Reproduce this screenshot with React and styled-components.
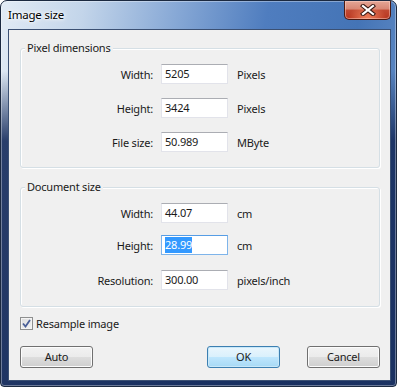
import React from 'react';
import styled, { createGlobalStyle } from 'styled-components';

const GlobalStyle = createGlobalStyle`
  html, body {
    margin: 0;
    padding: 0;
    background: #ffffff;
  }
  body {
    font-family: "Noto Sans", "Open Sans", sans-serif;
    font-size: 11px;
    letter-spacing: -0.2px;
    color: #1a1a1a;
  }
`;

const Window = styled.div`
  box-sizing: border-box;
  width: 397px;
  height: 387px;
  display: flex;
  flex-direction: column;
  border: 1px solid #1b2940;
  border-radius: 7px 7px 4px 4px;
  overflow: hidden;
  background:
    linear-gradient(to bottom, rgba(20, 40, 85, 0) 0px, rgba(20, 40, 85, 0) 70px, rgba(22, 44, 92, 0.9) 140px, rgba(22, 44, 92, 0.95) 100%),
    linear-gradient(100deg, #e2ebf5 0%, #c3d5ea 18%, #88a9d6 38%, #4f7dbf 58%, #4474b6 78%, #7098cd 100%);
  box-shadow: inset 0 0 0 1px rgba(255, 255, 255, 0.35);
`;

const TitleBar = styled.div`
  height: 28px;
  display: flex;
  align-items: flex-start;
  justify-content: space-between;
  flex-shrink: 0;
`;

const Title = styled.span`
  margin: 6px 0 0 7px;
  line-height: 16px;
  font-size: 11.5px;
  color: #000;
  text-shadow: 0 0 6px #fff, 0 0 4px #fff, 0 0 2px #fff;
`;

const CloseButton = styled.div`
  width: 47px;
  height: 19px;
  margin-right: 5px;
  box-sizing: border-box;
  border: 1px solid #4b1a12;
  border-top: none;
  border-radius: 0 0 5px 5px;
  background:
    radial-gradient(ellipse at 50% 100%, rgba(255, 150, 110, 0.8) 0%, rgba(255, 120, 90, 0) 60%),
    linear-gradient(to bottom, #e4a696 0%, #d78674 45%, #c14a33 50%, #b7341e 100%);
  box-shadow: inset 0 0 0 1px rgba(255, 220, 210, 0.45);
  display: flex;
  align-items: center;
  justify-content: center;
`;

const Client = styled.div`
  flex: 1;
  margin: 0 5px 5px 7px;
  border: 1px solid #3b5073;
  background: #f0f0f0;
  padding: 18px 10px 0 11px;
  display: flex;
  flex-direction: column;
`;

const GroupBox = styled.div`
  position: relative;
  box-sizing: border-box;
  height: 120px;
  margin-top: ${({ top }) => top || 0}px;
  border: 1px solid #d5dfe5;
  border-radius: 3px;
  box-shadow: inset 1px 1px 0 #fff, 1px 1px 0 #fff;
  padding-top: 15px;
`;

const Caption = styled.span`
  position: absolute;
  top: -9px;
  left: 4px;
  padding: 0 2px;
  line-height: 16px;
  background: #f0f0f0;
`;

const Row = styled.div`
  display: grid;
  grid-template-columns: 132px 67px auto;
  column-gap: 8px;
  align-items: center;
  height: 20px;
  margin-top: ${({ top }) => top || 0}px;
`;

const Label = styled.label`
  text-align: right;
`;

const Field = styled.div`
  box-sizing: border-box;
  height: 20px;
  padding: 0 3px;
  background: #fff;
  border: 1px solid ${({ focused }) => (focused ? '#7eb4ea' : '#e2e3ea')};
  border-top-color: ${({ focused }) => (focused ? '#569de5' : '#abadb3')};
  display: flex;
  align-items: center;
  line-height: 16px;
`;

const Selected = styled.span`
  background: #3399ff;
  color: #fff;
`;

const Unit = styled.span`
  padding-left: 1px;
`;

const CheckRow = styled.div`
  display: flex;
  align-items: center;
  gap: 3px;
  margin-top: 9px;
  height: 14px;
`;

const CheckBox = styled.div`
  box-sizing: border-box;
  width: 13px;
  height: 13px;
  border: 1px solid #8e8f8f;
  background: linear-gradient(135deg, #dcdcdc 0%, #f4f4f4 100%);
  box-shadow: inset 0 0 0 1px #f4f4f4;
  display: flex;
  align-items: center;
  justify-content: center;
`;

const ButtonRow = styled.div`
  display: flex;
  margin-top: 16px;
`;

const Button = styled.div`
  box-sizing: border-box;
  width: 73px;
  height: 22px;
  margin-left: ${({ push }) => (push ? 'auto' : '0')};
  margin-right: ${({ gapRight }) => gapRight || 0}px;
  border: 1px solid ${({ primary }) => (primary ? '#3c7fb1' : '#707070')};
  border-radius: 3px;
  background: ${({ primary }) =>
    primary
      ? 'linear-gradient(to bottom, #eaf6fd 0%, #d9f0fc 50%, #bee6fd 51%, #a7d9f5 100%)'
      : 'linear-gradient(to bottom, #f2f2f2 0%, #ebebeb 50%, #dddddd 51%, #cfcfcf 100%)'};
  box-shadow: inset 0 0 0 1px ${({ primary }) => (primary ? '#c8e8f9' : '#fcfcfc')};
  display: flex;
  align-items: center;
  justify-content: center;
  line-height: 16px;
`;

function App() {
  return (
    <>
      <GlobalStyle />
      <Window>
        <TitleBar>
          <Title>Image size</Title>
          <CloseButton>
            <svg width="16" height="12" viewBox="0 0 16 12">
              <path d="M3 2 L13 10 M13 2 L3 10" stroke="#3a1a14" strokeWidth="4.2" strokeLinecap="square" />
              <path d="M3 2 L13 10 M13 2 L3 10" stroke="#fff" strokeWidth="2.2" strokeLinecap="square" />
            </svg>
          </CloseButton>
        </TitleBar>
        <Client>
          <GroupBox>
            <Caption>Pixel dimensions</Caption>
            <Row>
              <Label>Width:</Label>
              <Field>5205</Field>
              <Unit>Pixels</Unit>
            </Row>
            <Row top={14}>
              <Label>Height:</Label>
              <Field>3424</Field>
              <Unit>Pixels</Unit>
            </Row>
            <Row top={14}>
              <Label>File size:</Label>
              <Field>50.989</Field>
              <Unit>MByte</Unit>
            </Row>
          </GroupBox>
          <GroupBox top={19}>
            <Caption>Document size</Caption>
            <Row>
              <Label>Width:</Label>
              <Field>44.07</Field>
              <Unit>cm</Unit>
            </Row>
            <Row top={12}>
              <Label>Height:</Label>
              <Field focused>
                <Selected>28.99</Selected>
              </Field>
              <Unit>cm</Unit>
            </Row>
            <Row top={15}>
              <Label>Resolution:</Label>
              <Field>300.00</Field>
              <Unit>pixels/inch</Unit>
            </Row>
          </GroupBox>
          <CheckRow>
            <CheckBox>
              <svg width="9" height="9" viewBox="0 0 9 9">
                <path d="M1 4.5 L3.5 7.5 L8 1" fill="none" stroke="#4a5f97" strokeWidth="1.8" />
              </svg>
            </CheckBox>
            <span>Resample image</span>
          </CheckRow>
          <ButtonRow>
            <Button>Auto</Button>
            <Button primary push gapRight={27}>OK</Button>
            <Button>Cancel</Button>
          </ButtonRow>
        </Client>
      </Window>
    </>
  );
}

export default App;
